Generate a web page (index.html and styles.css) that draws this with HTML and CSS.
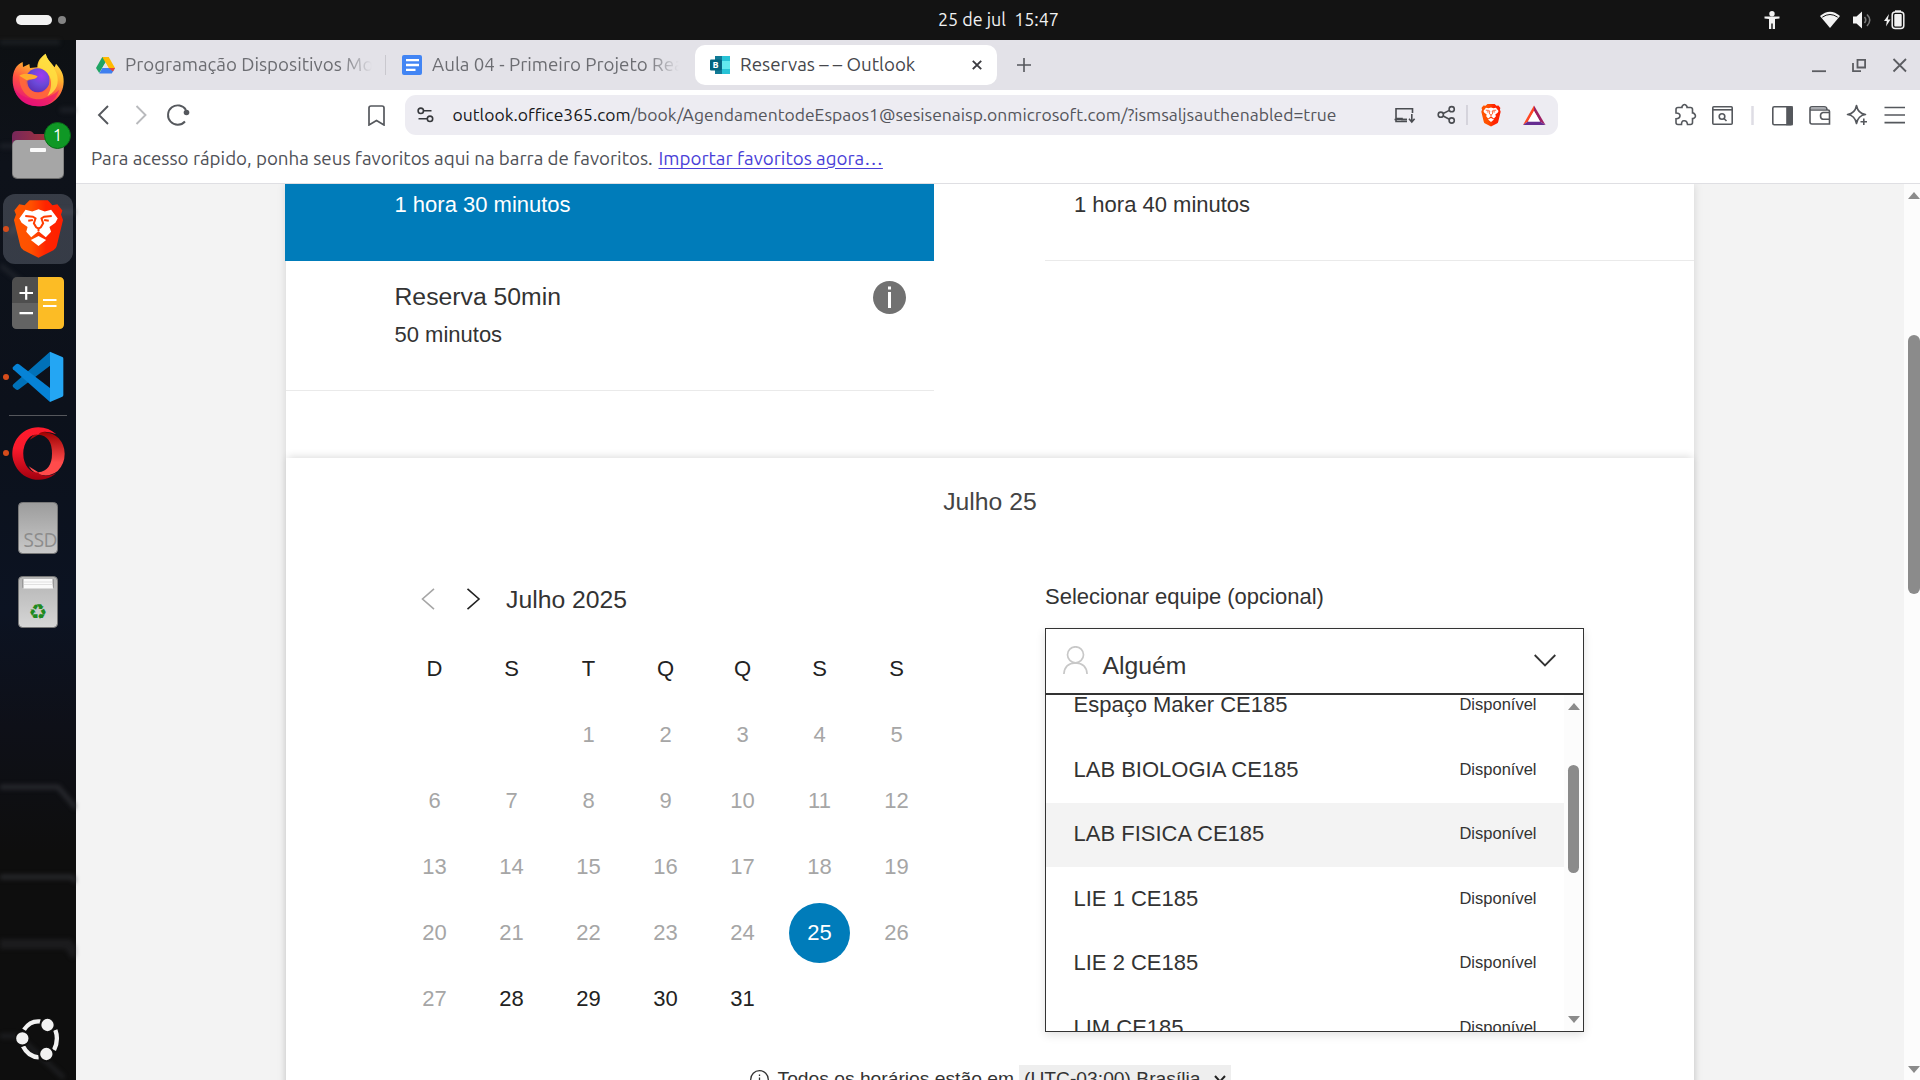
FILE: index.html
```html
<!DOCTYPE html>
<html lang="pt-BR">
<head>
<meta charset="utf-8">
<title>Reservas – – Outlook</title>
<link rel="stylesheet" href="styles.css">
</head>
<body>
<svg class="defs" width="0" height="0">
  <defs>
    <linearGradient id="lionFill"><stop offset="0" stop-color="#ff5500"/><stop offset=".35" stop-color="#ff5000"/><stop offset=".65" stop-color="#ff2400"/><stop offset="1" stop-color="#ff1f00"/></linearGradient>
    <linearGradient id="fxBody" x1=".8" y1="0" x2=".3" y2="1"><stop offset="0" stop-color="#fff04d"/><stop offset=".35" stop-color="#ffb22e"/><stop offset=".65" stop-color="#ff4f43"/><stop offset="1" stop-color="#e3127c"/></linearGradient>
    <radialGradient id="fxGlobe" cx=".65" cy=".3" r=".8"><stop offset="0" stop-color="#a03af0"/><stop offset=".5" stop-color="#6a49d8"/><stop offset="1" stop-color="#5b2bb0"/></radialGradient>
    <linearGradient id="opOut" x2="0" y2="1"><stop offset="0" stop-color="#ff1b2d"/><stop offset=".4" stop-color="#fa1a2c"/><stop offset="1" stop-color="#a3000f"/></linearGradient>
    <linearGradient id="opIn" x2="0" y2="1"><stop offset="0" stop-color="#9c0000"/><stop offset=".7" stop-color="#ff4b4b"/></linearGradient>
    <linearGradient id="ssd" x2="0" y2="1"><stop offset="0" stop-color="#9c9c9c"/><stop offset="1" stop-color="#c9c9c9"/></linearGradient>
    <linearGradient id="bin" x2="0" y2="1"><stop offset="0" stop-color="#b4b4b4"/><stop offset="1" stop-color="#d6d6d6"/></linearGradient>
    <linearGradient id="folderTab"><stop offset="0" stop-color="#76275a"/><stop offset="1" stop-color="#b8382f"/></linearGradient>
    <symbol id="lion" viewBox="38 597 154 180">
      <path d="M88 600H143L157 615 172 612 187 631 183 643 189 660 170 738Q168 746 160 751L115 774 70 751Q62 746 60 738L41 660 47 643 42 631 57 612 73 615Z" fill="url(#lionFill)"/>
      <path d="M76 629L96 634 115 627 134 634 153 629 173 655 166 668 148 681 153 695 137 712 115 694 93 712 78 695 82 681 64 668 57 655Z" fill="#fff"/>
      <path d="M115 708L138 720 115 738 92 720Z" fill="#fff"/>
      <path d="M75 648L98 650 106 655 101 670 108 682 115 686 122 682 129 670 124 655 132 650 155 648M84 662L98 660M146 662L132 660M115 684V694" fill="none" stroke="#ff3c00" stroke-width="6"/>
    </symbol>
  </defs>
</svg>

<header class="topbar">
  <div class="workspaces"><span class="ws-active"></span><span class="ws-dot"></span></div>
  <div class="clock">25 de jul&nbsp; 15:47</div>
  <div class="status">
    <svg class="st-a11y" width="16" height="18" viewBox="0 0 16 18" fill="#f2f2f2"><circle cx="8" cy="2.8" r="2.7"/><path d="M.5 5.6H15.5V7.4L11 8V18H8.7V12.5H7.3V18H5V8L.5 7.4Z"/></svg>
    <svg class="st-wifi" width="20" height="18" viewBox="0 0 20 18"><path d="M0 5Q10-3.500 20 5L10 17Z" fill="#f2f2f2"/><path d="M2.300 6.200Q10 .8 17.700 6.200" fill="none" stroke="#131313" stroke-width="1"/></svg>
    <svg class="st-vol" width="19" height="18" viewBox="0 0 19 18"><path d="M0 5.500H3.500L9 .5V17.500L3.500 12.500H0Z" fill="#f2f2f2"/><path d="M11.500 6Q14 9 11.500 12M14 3.500Q19.500 9 14 15" fill="none" stroke="#777" stroke-width="1.600"/></svg>
    <svg width="21" height="20" viewBox="0 0 21 20"><path d="M5 4L0 11H2.800L2 16.500 6.500 9.500H3.800Z" fill="#f2f2f2"/><path d="M11 .3H17V2H11Z" fill="#f2f2f2"/><rect x="8.200" y="1.900" width="11.600" height="16.600" rx="3" fill="none" stroke="#f2f2f2" stroke-width="1.500"/><rect x="10.300" y="4" width="7.400" height="12.400" rx="1" fill="#f2f2f2"/></svg>
  </div>
</header>

<div class="desktop">
  <nav class="dock">
    <svg class="wallpaper" width="76" height="1040" viewBox="0 40 76 1040" fill="none" stroke="#3a3d42" stroke-width="5">
      <path d="M0 42H60M0 146H14L40 172M0 265L26 285M60 110H76M10 234L30 212H76" opacity=".35"/>
      <path d="M0 787H58L76 808M0 877H72L76 882" opacity=".55"/>
      <path d="M0 944H68L76 956" stroke-width="10" opacity=".3"/>
      <path d="M0 1036H18L64 1078" opacity=".35"/>
    </svg>
    <div class="dock-item">
      <svg width="54" height="54" viewBox="34 160 160 162">
        <path d="M114 320C70 320 38 286 38 242 38 215 48 195 68 187L69 202 88 193 90 205 112 203C112 185 122 172 137 162 141 180 154 188 164 203L168 192C182 208 192 222 191 246 190 290 156 320 114 320Z" fill="url(#fxBody)"/>
        <path d="M40 262C60 300 130 316 178 270 166 304 142 320 114 320 76 320 48 296 40 262Z" fill="#e50b78" opacity=".55"/>
        <circle cx="113" cy="242" r="36" fill="url(#fxGlobe)"/>
        <path d="M58 228C70 218 92 222 112 230 106 242 92 238 82 244 82 270 104 284 126 278 146 272 154 250 146 226 168 250 160 290 124 298 84 304 56 270 58 228Z" fill="#ff6a3a" opacity=".85"/>
        <path d="M58 228C72 218 96 222 113 230 106 242 92 236 80 242Z" fill="#ffab2d"/>
        <path d="M114 203C116 186 124 173 137 162 142 184 166 200 172 230 178 262 160 280 142 290 166 250 150 212 114 203Z" fill="#ffe142" opacity=".85"/>
      </svg>
    </div>
    <div class="dock-item">
      <svg class="files" width="52" height="49" viewBox="0 0 52 49"><path d="M0 5Q0 0 5 0H18Q20 0 22 3H47Q52 3 52 8V20H0Z" fill="url(#folderTab)"/><rect y="9" width="52" height="39" rx="5" fill="#6c6c6c"/><rect x=".6" y="9" width="50.800" height="38" rx="5" fill="#a6a6a6"/><rect x="18" y="17" width="16" height="4" rx="1" fill="#fafafa"/></svg>
      <span class="badge">1</span>
    </div>
    <div class="dock-item focused running"><svg width="51" height="60"><use href="#lion"/></svg></div>
    <div class="dock-item">
      <svg width="52" height="52" viewBox="0 0 52 52"><rect width="52" height="52" rx="5" fill="#4e4e4e"/><path d="M0 26H26V52H5Q0 52 0 47Z" fill="#636363"/><path d="M26 0H47Q52 0 52 5V47Q52 52 47 52H26Z" fill="#fcbc25"/><path d="M7.500 16H21M14.200 9.200V22.800M7.500 36.200H21M31 23H44.500M31 29H44.500" stroke="#fff" stroke-width="2.200"/></svg>
    </div>
    <div class="dock-item running">
      <svg width="52" height="52" viewBox="36 273 156 156"><path d="M150 275V317L57 388Q52 392 47 388L39 381Q36 377 40 373Z" fill="#0071b8"/><path d="M150 426L39 328Q36 324 39 321L48 313Q52 310 57 313L150 384Z" fill="#0683d6"/><path d="M150 275L187 291Q190 292 190 296V405Q190 409 187 410L150 426Z" fill="#24a6f3"/></svg>
    </div>
    <div class="dock-sep"></div>
    <div class="dock-item running">
      <svg width="53" height="53" viewBox="35 502 159 159"><path d="M88 540Q105 514 130 516Q160 520 175 536Q193 556 193 582Q193 612 172 634Q150 650 130 647Q100 645 85 620L114 638Q155 632 155 582Q155 528 114 525Z" fill="url(#opIn)"/><path d="M114 502.500A79 79 0 1 0 168 640Q150 650 132 648Q114 645 114 638A40 57 0 1 1 114 525Q118 516 134 516 152 517 168 524A79 79 0 0 0 114 502.500Z" fill="url(#opOut)"/></svg>
    </div>
    <div class="dock-item"><svg width="40" height="52" viewBox="0 0 40 52"><rect x=".5" y=".5" width="39" height="51" rx="4" fill="url(#ssd)" stroke="#777"/><text x="5.500" y="45" textLength="34" lengthAdjust="spacingAndGlyphs" font-family="Ubuntu, Noto Sans, sans-serif" font-size="20" fill="#8c8c8c">SSD</text></svg></div>
    <div class="dock-item"><svg width="40" height="52" viewBox="0 0 40 52"><rect x=".5" y=".5" width="39" height="51" rx="4" fill="url(#bin)" stroke="#777"/><rect x="4" y="3" width="32" height="9" rx="1" fill="#999"/><path d="M5.500 3H34.500V7L35 12.500H5.500Z" fill="#fafafa"/><path d="M6 6H34M6 8.500H34" stroke="#d4d4d4" stroke-width=".7"/><text x="20" y="42.500" text-anchor="middle" font-family="DejaVu Sans, sans-serif" font-size="21" fill="#1f8a1f">♻</text></svg></div>
    <svg class="show-apps" width="46" height="46" viewBox="44 772 138 138"><path d="M120 785.500Q90 782 71 810M68 860Q84 892 115 893M165 811Q176 841 161 871" fill="none" stroke="#f2f2f2" stroke-width="13"/><g fill="#f2f2f2" stroke="#101010" stroke-width="6"><circle cx="141.500" cy="796" r="21.500"/><circle cx="66" cy="836" r="21.500"/><circle cx="138" cy="883" r="21.500"/></g></svg>
  </nav>

  <div class="browser">
    <div class="tabs">
      <div class="tab first">
        <svg width="19" height="17" viewBox="0 0 19 17"><path d="M6.300 0H12.700L9.500 5.500 3.200 16 0 11Z" fill="#1fa463"/><path d="M6.300 0H12.700L19 11H12.600Z" fill="#ffba00"/><path d="M3.200 16.500L6.400 11H19L15.800 16.500Z" fill="#3f7fef"/><path d="M9.500 5.600L12.600 11H6.400Z" fill="#e3e2e8"/><path d="M12.600 11H19L17 14.500Z" fill="#ea4335"/></svg>
        <span class="tab-title t1">Programação Dispositivos Mo</span>
      </div>
      <div class="tab second">
        <svg width="20" height="20" viewBox="0 0 20 20"><rect width="20" height="20" rx="2" fill="#4285f4"/><path d="M4 5.200H17M4 10H17M4 14.800H13.500" stroke="#fff" stroke-width="2.300"/></svg>
        <span class="tab-title t2">Aula 04 - Primeiro Projeto Rea</span>
      </div>
      <div class="tab active">
        <svg width="20" height="18" viewBox="0 0 20 18"><path d="M5 0H20V18H5Z" fill="#28c3d6"/><path d="M5 0H12V4H5ZM5 14H12V18H5Z" fill="#117a96"/><path d="M12 5H20V13H12Z" fill="#63e9ee"/><path d="M5 4H12V14H5Z" fill="#0a6484"/><rect y="3.500" width="11" height="11" rx="1" fill="#04647f"/><text x="5.500" y="12.300" text-anchor="middle" font-family="Open Sans, sans-serif" font-weight="700" font-size="9" fill="#fff">B</text></svg>
        <span class="tab-title t3">Reservas – – Outlook</span>
        <svg class="tab-close" width="10" height="10" viewBox="0 0 10 10"><path d="M.8.800L9.200 9.200M9.200.800L.8 9.200" stroke="#3b3b40" stroke-width="1.900"/></svg>
      </div>
      <svg class="new-tab" width="14" height="14" viewBox="0 0 14 14"><path d="M7 0V14M0 7H14" stroke="#55575c" stroke-width="1.600"/></svg>
      <svg class="win-btns" width="96" height="16" viewBox="0 0 96 16" fill="none" stroke="#5c5d62" stroke-width="1.800"><path d="M0 14.200H14"/><path d="M45.500 2.900H53.100V10.500H45.500Z"/><path d="M41 6V14.200H49"/><path d="M81.500 2L94 14.500M94 2L81.500 14.500"/></svg>
    </div>

    <div class="toolbar">
      <svg width="97" height="24" viewBox="96 103 97 24" fill="none" stroke-width="1.900"><path d="M108 106L99 115 108 124" stroke="#55585d"/><path d="M136.500 106L145.500 115 136.500 124" stroke="#b9babd"/><path d="M186 110A9.700 9.700 0 1 0 185 121.500" stroke="#55585d"/><circle cx="186.500" cy="112.500" r="2.800" fill="#55585d" stroke="none"/></svg>
      <svg class="bm" width="17" height="21" viewBox="0 0 17 21"><path d="M1 3Q1 1 3 1H14Q16 1 16 3V20L8.500 15.500 1 20Z" fill="none" stroke="#55585d" stroke-width="1.700"/></svg>
      <div class="address">
        <svg width="17" height="16" viewBox="417 107.500 17 16" fill="none" stroke="#36383c" stroke-width="1.600"><circle cx="420.800" cy="111.300" r="2.700"/><path d="M424 111.300H431.500M418.500 119.300H427"/><circle cx="430" cy="119.300" r="2.700"/></svg>
        <span class="url"><b>outlook.office365.com</b>/book/AgendamentodeEspaos1@sesisenaisp.onmicrosoft.com/?ismsaljsauthenabled=true</span>
        <svg class="addr-icons" width="152" height="24" viewBox="1394 103 152 24" fill="none" stroke="#4a4c51" stroke-width="1.600">
          <path d="M1412.500 113V108.800H1396V121.500H1407M1396 118.500H1402V119.500H1407"/><path d="M1394.500 119.500H1407M1411.800 114V121.500M1409 118.800L1411.800 122 1414.600 118.800"/>
          <circle cx="1451.700" cy="109.200" r="2.600"/><circle cx="1440.800" cy="114.700" r="2.600"/><circle cx="1451.700" cy="120.500" r="2.600"/><path d="M1443.200 113.500L1449.300 110.400M1443.200 116L1449.300 119.300"/>
          <path d="M1467 105V125" stroke="#cfced6"/>
          <use href="#lion" x="1480.500" y="103.500" width="21" height="23.500" stroke="none"/>
          <g stroke="none"><path d="M1534 105.500L1523 125 1528 121.500 1534 111Z" fill="#ff4724"/><path d="M1534 105.500L1545.500 125 1540 121.500 1534 111Z" fill="#9e1f63"/><path d="M1523 125H1545.500L1540 121.500H1528Z" fill="#662d91"/><path d="M1534 111L1540 121.500H1528Z" fill="#fff"/></g>
        </svg>
      </div>
      <svg class="tools" width="232" height="24" viewBox="1674 103 232 24" fill="none" stroke="#55585d" stroke-width="1.600">
        <path d="M1676 109.500Q1676 107.500 1678 107.500H1682V106.500Q1684.500 102.500 1687 106.500V107.500H1690.500Q1692.500 107.500 1692.500 109.500V113H1693.500Q1697.500 116 1693.500 118.500H1692.500V122.500Q1692.500 124.500 1690.500 124.500H1687.500Q1687 120.500 1684 120.800 1681.500 120.500 1681.500 124.500H1678Q1676 124.500 1676 122.500V118.800Q1680 118.500 1680 115.800 1680 113.200 1676 113Z"/>
        <rect x="1712.800" y="106.800" width="19.400" height="17.400" rx="1"/><path d="M1712.800 109.800H1732.200"/><circle cx="1722" cy="116.500" r="2.800"/><path d="M1724 118.500L1726.500 121"/>
        <path d="M1752.500 106V125" stroke="#dedde4" stroke-width="2.500"/>
        <rect x="1772.800" y="106.800" width="19.400" height="18" rx="1.500"/><path d="M1787 107H1792V124.500H1787Z" fill="#55585d"/>
        <path d="M1810 109V122Q1810 124 1812 124H1829.500V111.500Q1829.500 110 1828 110H1811Q1810 110 1810 108.500 1810 106.800 1812 106.800H1824Q1827 106.800 1827 110M1829.500 112.500H1823Q1820.500 113 1820.500 115.700 1820.500 119 1823 119.200H1829.500"/><path d="M1811 108.400H1826" stroke="#a9abb0"/>
        <path d="M1856.500 105.500Q1858 113.500 1865.500 114.500 1858 115.500 1856.500 123.500 1855 115.500 1847.500 114.500 1855 113.500 1856.500 105.500ZM1863.800 118.500V125M1860.500 121.800H1867" stroke-linejoin="round"/>
        <path d="M1884.500 107.500H1905M1884.500 115H1905M1884.500 122.600H1905"/>
      </svg>
    </div>

    <div class="favbar"><span class="fav-text">Para acesso rápido, ponha seus favoritos aqui na barra de favoritos.</span><a class="fav-link">Importar favoritos agora…</a></div>

    <div class="viewport">
      <main class="page">
        <section class="services">
          <article class="service selected"><p>1 hora 30 minutos</p></article>
          <article class="service top-right"><p>1 hora 40 minutos</p></article>
          <article class="service below"><div><h3>Reserva 50min</h3><p>50 minutos</p></div>
            <svg width="33" height="33" viewBox="0 0 33 33"><circle cx="16.500" cy="16.500" r="16.500" fill="#717171"/><path d="M15 5.500H18V8.500H15ZM15 11H18V27H15Z" fill="#fff"/></svg>
          </article>
        </section>
        <section class="schedule">
          <h2>Julho 25</h2>
          <div class="columns">
            <div class="calendar">
              <div class="cal-nav">
                <svg width="60" height="22" viewBox="0 0 60 22" fill="none" stroke-width="1.600"><path d="M13 .8L1.500 11 13 21.200" stroke="#a6a6a6"/><path d="M46.500.8L58 11 46.500 21.200" stroke="#222"/></svg>
                <span>Julho 2025</span>
              </div>
              <div class="grid">
                <b>D</b><b>S</b><b>T</b><b>Q</b><b>Q</b><b>S</b><b>S</b>
                <i></i><i></i><i>1</i><i>2</i><i>3</i><i>4</i><i>5</i>
                <i>6</i><i>7</i><i>8</i><i>9</i><i>10</i><i>11</i><i>12</i>
                <i>13</i><i>14</i><i>15</i><i>16</i><i>17</i><i>18</i><i>19</i>
                <i>20</i><i>21</i><i>22</i><i>23</i><i>24</i><b><span class="today">25</span></b><i>26</i>
                <i>27</i><b>28</b><b>29</b><b>30</b><b>31</b>
              </div>
            </div>
            <div class="staff">
              <label>Selecionar equipe (opcional)</label>
              <div class="combo">
                <div class="combo-head">
                  <svg class="person" width="25" height="28" viewBox="0 0 25 28" fill="none" stroke="#c8c8c8" stroke-width="1.700"><ellipse cx="12.500" cy="8.800" rx="8" ry="8"/><path d="M.9 28Q1.500 17.200 12.500 16.800 23.500 17.200 24.100 28"/></svg>
                  <span>Alguém</span>
                  <svg class="chev" width="22" height="13" viewBox="0 0 22 13"><path d="M.7 1L11 11.500 21.300 1" fill="none" stroke="#333" stroke-width="1.800"/></svg>
                </div>
                <div class="combo-body">
                  <ul>
                    <li><span>Espaço Maker CE185</span><small>Disponível</small></li>
                    <li><span>LAB BIOLOGIA CE185</span><small>Disponível</small></li>
                    <li class="hover"><span>LAB FISICA CE185</span><small>Disponível</small></li>
                    <li><span>LIE 1 CE185</span><small>Disponível</small></li>
                    <li><span>LIE 2 CE185</span><small>Disponível</small></li>
                    <li><span>LIM CE185</span><small>Disponível</small></li>
                  </ul>
                  <div class="list-scroll"><span class="arr up"></span><span class="thumb"></span><span class="arr down"></span></div>
                </div>
              </div>
            </div>
          </div>
          <div class="timezone">
            <svg width="19" height="19" viewBox="0 0 19 19" fill="none" stroke="#333" stroke-width="1.300"><circle cx="9.500" cy="9.500" r="8.800"/><path d="M9.500 4.500V6M9.500 7.500V14"/></svg>
            <span class="tz-label">Todos os horários estão em</span>
            <span class="tz-select">(UTC-03:00) Brasília<svg width="12" height="8" viewBox="0 0 12 8"><path d="M1 1L6 6.500 11 1" fill="none" stroke="#222" stroke-width="2"/></svg></span>
          </div>
        </section>
      </main>
      <div class="page-scroll"><span class="arr up"></span><span class="thumb"></span><span class="arr down"></span></div>
    </div>
  </div>
</div>
</body>
</html>
```
FILE: styles.css
```css
* { box-sizing: border-box; margin: 0; padding: 0; }
body { width: 1920px; height: 1080px; overflow: hidden; display: flex; flex-direction: column; font-family: "Ubuntu", "Noto Sans", sans-serif; background: #131313; }
svg { display: block; flex: none; }
.defs { position: absolute; }

.topbar { height: 40px; flex: none; display: grid; grid-template-columns: 1fr auto 1fr; align-items: center; background: #131313; color: #f2f2f2; }
.workspaces { display: flex; align-items: center; gap: 6px; padding-left: 16px; }
.ws-active { width: 36px; height: 10px; border-radius: 5px; background: #f2f2f2; }
.ws-dot { width: 8px; height: 8px; border-radius: 50%; background: #848484; }
.clock { font-size: 17.900px; line-height: 24px; padding-left: 78px; margin: -2px 0 0 -1px; white-space: nowrap; }
.status { display: flex; align-items: center; justify-content: flex-end; padding-right: 15px; }
.st-a11y { margin-right: 40px; }
.st-wifi { margin-right: 13px; }
.st-vol { margin-right: 12px; }

.desktop { flex: 1; min-height: 0; display: flex; }
.dock { width: 76px; flex: none; position: relative; display: flex; flex-direction: column; align-items: center; padding: 3px 0 17px; background: linear-gradient(180deg, #0d1013 0, #0e121a 12%, #0c111b 36%, #0c1322 55%, #0e1018 66%, #0e0e0e 78%, #0e0e0e 100%); }
.wallpaper { position: absolute; inset: 0; filter: blur(2px); }
.dock-item { position: relative; width: 70px; height: 70px; margin: 2px 0 2.250px; display: flex; align-items: center; justify-content: center; flex: none; border-radius: 12px; }
.dock-item.focused { background: rgba(140, 145, 160, .33); }
.dock-item.running::before { content: ""; position: absolute; left: 0; top: 32px; width: 6px; height: 6px; border-radius: 50%; background: #d64c1b; }
.files { margin-top: 2px; }
.badge { position: absolute; left: 41px; top: 3px; width: 27px; height: 27px; border-radius: 50%; background: #0f9825; border: 1px solid #0a6b19; color: #fff; font-size: 16px; line-height: 25px; text-align: center; }
.dock-sep { width: 58px; height: 1px; background: #55575c; margin: 1px 0 .200px; }
.show-apps { margin-top: auto; position: relative; }

.browser { flex: 1; min-width: 0; display: flex; flex-direction: column; background: #fff; }
.tabs { height: 50px; flex: none; display: flex; align-items: center; background: #e3e2e8; }
.tab { display: flex; align-items: center; height: 40px; }
.tab-title { font-size: 18.750px; line-height: 24px; white-space: nowrap; color: #6c6d72; }
.first { width: 310px; padding-left: 20px; gap: 10px; position: relative; }
.first::after { content: ""; position: absolute; right: 0; top: 10px; width: 1px; height: 20px; background: #c9c8ce; }
.second { width: 309px; padding-left: 16px; gap: 10px; }
.t1, .t2 { width: 248px; -webkit-mask-image: linear-gradient(90deg, #000 215px, transparent 247px); mask-image: linear-gradient(90deg, #000 215px, transparent 247px); }
.active { width: 302px; background: #fff; border-radius: 10px; padding: 0 15px; }
.active .tab-title { color: #46474c; margin-left: 10px; }
.tab-close { margin-left: auto; }
.new-tab { margin-left: 20px; }
.win-btns { margin-left: auto; margin-right: 12px; }

.toolbar { height: 50px; flex: none; display: flex; align-items: center; padding-left: 20px; }
.bm { margin-left: 175px; margin-right: 20px; }
.address { width: 1153px; height: 40px; border-radius: 11px; background: #edecf2; display: flex; align-items: center; padding-left: 12px; }
.url { margin-left: 18.500px; font-size: 17.510px; line-height: 24px; margin-top: -1px; color: #54555b; white-space: nowrap; }
.url b { font-weight: 400; color: #17181b; }
.addr-icons { margin-left: auto; margin-right: 12px; }
.tools { margin-left: auto; margin-right: 14px; }

.favbar { height: 44px; flex: none; display: flex; padding: 6px 0 0 15px; border-bottom: 1px solid #dfdfe3; font-size: 18.750px; line-height: 26px; color: #4f5157; white-space: nowrap; }
.fav-text { width: 567.500px; }
.fav-link { color: #4a3fd8; text-decoration: underline; text-underline-offset: 3px; }

.viewport { flex: 1; min-height: 0; display: flex; background: #f3f3f3; overflow: hidden; font-family: "Liberation Sans", Arial, sans-serif; color: #333; }
.page { width: 1408px; height: 1000px; margin: 0 210px; flex: none; background: #fff; box-shadow: 0 0 9px rgba(0, 0, 0, .13); font-size: 22px; line-height: 30px; }
.services { height: 274px; display: grid; grid-template-columns: 648px 649px; grid-template-rows: 77px 130px; justify-content: space-between; }
.service { border-bottom: 1px solid #eaeaea; }
.selected { background: #007cba; color: #fff; border: 0; margin-left: -1px; padding: 6.400px 0 0 109.500px; }
.top-right { padding: 6.400px 0 0 29px; }
.below { display: flex; justify-content: space-between; padding: 19px 28px 0 108.500px; }
.below svg { margin-top: 1px; }
h3 { font-size: 24.750px; line-height: 34px; font-weight: 400; margin-bottom: 6px; }
.schedule { box-shadow: 0 -3px 8px -2px rgba(0, 0, 0, .15); padding-top: 27.400px; height: 700px; }
h2 { font-size: 24.750px; line-height: 34px; font-weight: 400; text-align: center; color: #444; margin-bottom: 63px; }
.columns { display: flex; justify-content: space-between; padding: 0 110px; height: 451px; }
.cal-nav { display: flex; align-items: center; gap: 25px; height: 54px; padding: 0 0 18px 25px; font-size: 24.750px; line-height: 34px; }
.cal-nav svg { margin-top: -2px; }
.grid { display: grid; grid-template-columns: repeat(7, 77px); grid-auto-rows: 66px; }
.grid > * { font-style: normal; font-weight: 400; display: flex; align-items: center; justify-content: center; color: #a6a6a6; }
.grid b { color: #222; }
.grid .today { width: 61px; height: 60px; border-radius: 50%; background: #007cba; color: #fff; line-height: 60px; text-align: center; }
.staff { width: 539px; }
.staff label { display: block; margin-bottom: 15.600px; }
.combo { border: 1px solid #333; height: 404px; display: flex; flex-direction: column; box-shadow: 0 3px 9px rgba(0, 0, 0, .12); }
.combo-head { height: 66px; flex: none; display: flex; border-bottom: 2px solid #333; padding-left: 17px; font-size: 24.750px; line-height: 34px; background: #fff; }
.person { margin-top: 17px; }
.combo-head span { margin: 20px 0 0 14.500px; }
.chev { margin: 25px 27.500px 0 auto; }
.combo-body { flex: 1; min-height: 0; display: flex; overflow: hidden; }
.combo ul { flex: 1; list-style: none; margin-top: -21px; }
.combo li { height: 64.500px; display: flex; align-items: center; justify-content: space-between; padding: 0 27.500px 2px; }
.combo li small { font-size: 16.500px; margin-top: -2px; }
.combo li.hover { background: #f3f3f3; }
.list-scroll { width: 19px; background: #fcfcfc; display: flex; flex-direction: column; align-items: center; padding: 8px 0; }
.list-scroll .thumb { width: 11px; height: 108px; border-radius: 6px; background: #8b8b8b; margin-top: 55px; }
.arr { border: 6.500px solid transparent; flex: none; }
.arr.up { border-top: 0; border-bottom: 7px solid #8b8b8b; }
.arr.down { border-bottom: 0; border-top: 7px solid #8b8b8b; margin-top: auto; }
.timezone { display: flex; align-items: center; justify-content: center; height: 29px; margin-top: 31.600px; font-size: 19.250px; }
.tz-label { margin: -1px 5px 0 9px; }
.tz-select { background: #eee; height: 29px; line-height: 28px; padding: 0 5px; display: flex; align-items: center; gap: 13px; }
.page-scroll { width: 16px; background: #fcfcfc; display: flex; flex-direction: column; align-items: flex-end; padding: 8px 0 7px; overflow: hidden; }
.page-scroll .thumb { width: 12px; height: 259px; border-radius: 6px; background: #8b8b8b; margin-top: 136px; }
```
